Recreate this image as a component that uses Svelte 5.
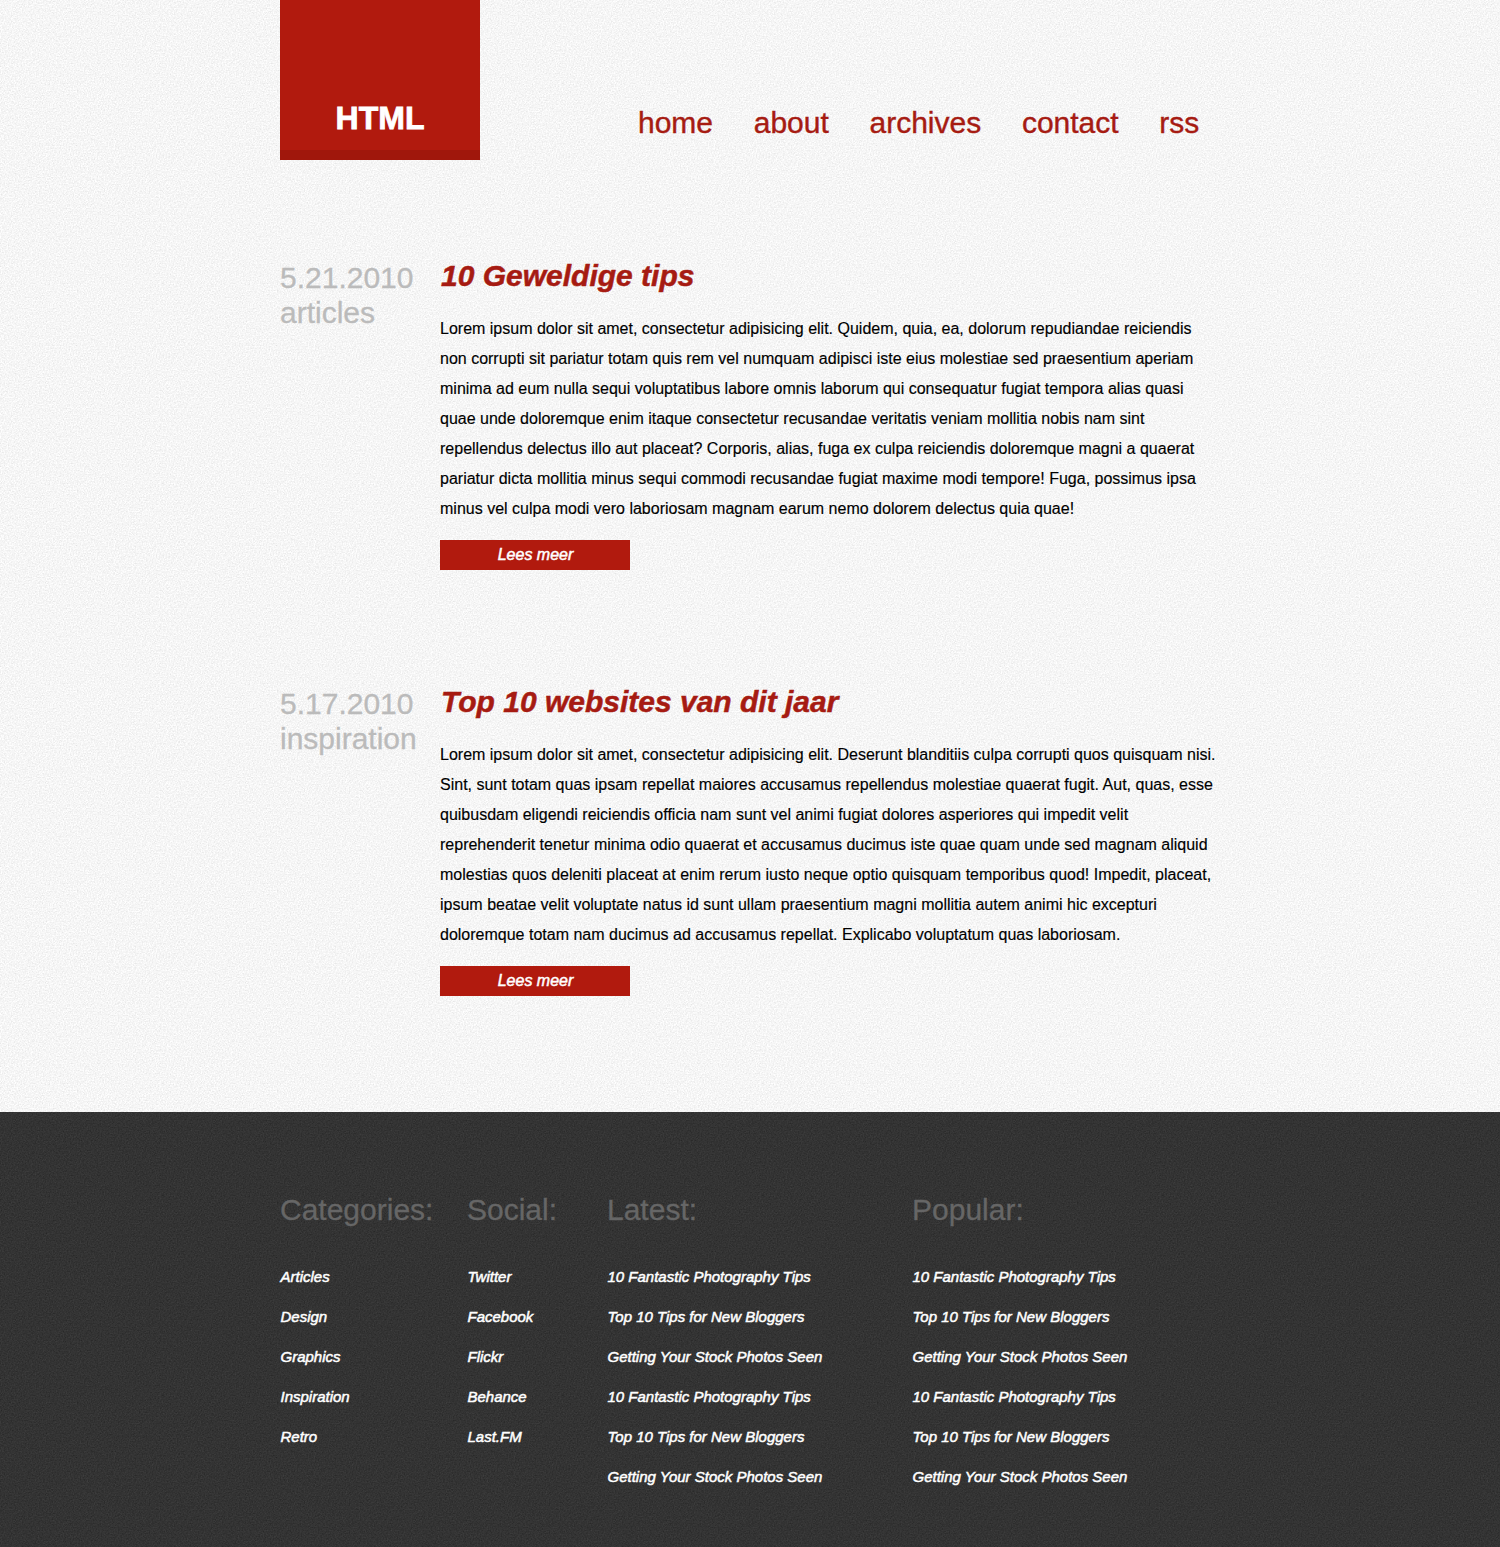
<script>
  const nav = ['home', 'about', 'archives', 'contact', 'rss'];
  const posts = [
    {
      date: '5.21.2010', tag: 'articles', title: '10 Geweldige tips',
      lines: [
        'Lorem ipsum dolor sit amet, consectetur adipisicing elit. Quidem, quia, ea, dolorum repudiandae reiciendis',
        'non corrupti sit pariatur totam quis rem vel numquam adipisci iste eius molestiae sed praesentium aperiam',
        'minima ad eum nulla sequi voluptatibus labore omnis laborum qui consequatur fugiat tempora alias quasi',
        'quae unde doloremque enim itaque consectetur recusandae veritatis veniam mollitia nobis nam sint',
        'repellendus delectus illo aut placeat? Corporis, alias, fuga ex culpa reiciendis doloremque magni a quaerat',
        'pariatur dicta mollitia minus sequi commodi recusandae fugiat maxime modi tempore! Fuga, possimus ipsa',
        'minus vel culpa modi vero laboriosam magnam earum nemo dolorem delectus quia quae!'
      ]
    },
    {
      date: '5.17.2010', tag: 'inspiration', title: 'Top 10 websites van dit jaar',
      lines: [
        'Lorem ipsum dolor sit amet, consectetur adipisicing elit. Deserunt blanditiis culpa corrupti quos quisquam nisi.',
        'Sint, sunt totam quas ipsam repellat maiores accusamus repellendus molestiae quaerat fugit. Aut, quas, esse',
        'quibusdam eligendi reiciendis officia nam sunt vel animi fugiat dolores asperiores qui impedit velit',
        'reprehenderit tenetur minima odio quaerat et accusamus ducimus iste quae quam unde sed magnam aliquid',
        'molestias quos deleniti placeat at enim rerum iusto neque optio quisquam temporibus quod! Impedit, placeat,',
        'ipsum beatae velit voluptate natus id sunt ullam praesentium magni mollitia autem animi hic excepturi',
        'doloremque totam nam ducimus ad accusamus repellat. Explicabo voluptatum quas laboriosam.'
      ]
    }
  ];
  const tips = ['10 Fantastic Photography Tips', 'Top 10 Tips for New Bloggers', 'Getting Your Stock Photos Seen'];
  const columns = [
    { title: 'Categories:', items: ['Articles', 'Design', 'Graphics', 'Inspiration', 'Retro'] },
    { title: 'Social:', items: ['Twitter', 'Facebook', 'Flickr', 'Behance', 'Last.FM'] },
    { title: 'Latest:', items: [...tips, ...tips] },
    { title: 'Popular:', items: [...tips, ...tips] }
  ];
</script>

{#snippet grain(id, matrix)}
  <svg class="grain" aria-hidden="true">
    <defs>
      <filter {id} x="0" y="0" width="100%" height="100%" color-interpolation-filters="sRGB">
        <feTurbulence type="fractalNoise" baseFrequency="0.71" numOctaves="3" stitchTiles="stitch" />
        <feColorMatrix type="matrix" values={matrix} />
      </filter>
      <pattern id="{id}-tile" width="200" height="200" patternUnits="userSpaceOnUse">
        <rect width="200" height="200" filter="url(#{id})" />
      </pattern>
    </defs>
    <rect width="100%" height="100%" fill="url(#{id}-tile)" />
  </svg>
{/snippet}

<div class="page">
  <div class="upper">
    {@render grain('light', '.14 .08 0 0 .853  .14 .08 0 0 .853  .14 .08 0 0 .853  0 0 0 0 1')}
    <div class="wrap">
      <header>
        <h1>HTML</h1>
        <nav>{#each nav as item}<a href="#{item}">{item}</a>{/each}</nav>
      </header>
      <main>
        {#each posts as post}
          <article>
            <div class="meta">{post.date}<br />{post.tag}</div>
            <div class="content">
              <h2>{post.title}</h2>
              <p>{#each post.lines as line}<span>{line}</span>{/each}</p>
              <a class="more" href="#more">Lees meer</a>
            </div>
          </article>
        {/each}
      </main>
    </div>
  </div>
  <footer>
    {@render grain('dark', '.10 .06 0 0 .121  .10 .06 0 0 .121  .10 .06 0 0 .121  0 0 0 0 1')}
    <div class="wrap columns">
      {#each columns as column}
        <section>
          <h3>{column.title}</h3>
          <ul>{#each column.items as item}<li><a href="#item">{item}</a></li>{/each}</ul>
        </section>
      {/each}
    </div>
  </footer>
</div>

<style>
  :global(body) { margin: 0; }
  .page { font-family: "Liberation Sans", Helvetica, Arial, sans-serif; font-size: 16px; color: #000; }
  .upper, footer { position: relative; overflow: hidden; box-sizing: border-box; }
  .upper { height: 1112px; background: #f7f7f7; }
  footer { height: 435px; background: #333; padding-top: 80px; }
  .grain { position: absolute; inset: 0; width: 100%; height: 100%; }
  .wrap { position: relative; width: 940px; margin: 0 auto; }
  a { text-decoration: none; }
  header { display: flex; height: 160px; }
  h1 { box-sizing: border-box; width: 200px; height: 160px; margin: 0; padding-top: 100px; border-bottom: 10px solid #a0170c; background: #b11a0e; color: #fff; font-size: 32px; line-height: 37px; text-align: center; -webkit-text-stroke: 0.8px; }
  nav { display: flex; gap: 40.7px; margin-left: 158px; padding-top: 105px; }
  nav a { color: #a61b12; font-size: 30px; line-height: 35px; -webkit-text-stroke: 0.4px; }
  main { padding-top: 95px; }
  article { display: flex; height: 426px; }
  .meta { width: 160px; padding-top: 5px; color: #bbb; font-size: 30px; line-height: 35px; -webkit-text-stroke: 0.3px; }
  h2 { margin: 0; padding: 1px 0 0 1px; color: #a61b12; font-size: 30px; line-height: 40px; font-style: italic; white-space: nowrap; -webkit-text-stroke: 0.5px; }
  p { margin: 18px 0 16px; line-height: 30px; -webkit-text-stroke: 0.15px; }
  p span { display: block; white-space: nowrap; }
  .more { display: block; width: 190px; height: 30px; background: #b11a0e; color: #fff; font-style: italic; line-height: 29px; text-align: center; text-indent: 1px; -webkit-text-stroke: 0.5px; }
  .columns { display: grid; grid-template-columns: 187px 140px 305px 1fr; }
  h3 { margin: 0; color: #666; font-size: 30px; line-height: 35px; font-weight: 400; -webkit-text-stroke: 0.3px; }
  ul { list-style: none; margin: 30px 0 0; padding: 0 0 0 0.5px; }
  li { height: 40px; line-height: 40px; font-size: 15px; }
  li a { color: #fff; font-style: italic; -webkit-text-stroke: 0.5px; }
</style>
